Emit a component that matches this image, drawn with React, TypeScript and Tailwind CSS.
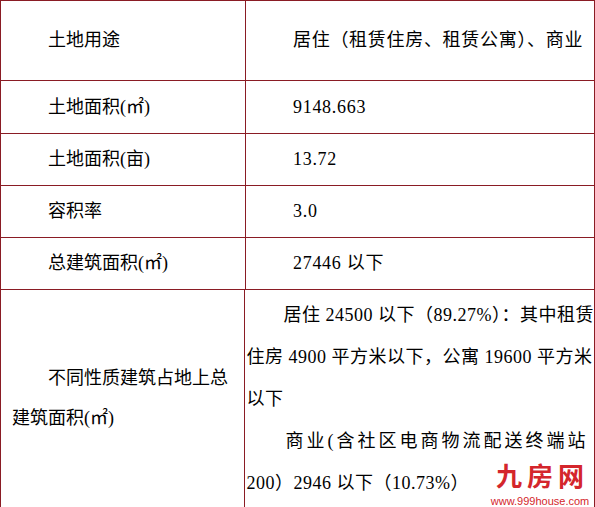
const serif = "font-['Liberation_Serif','Noto_Sans_CJK_SC',serif]";

const rows: { label: string; value: string; h: string }[] = [
  { label: "土地用途", value: "居住（租赁住房、租赁公寓）、商业", h: "h-[80px]" },
  { label: "土地面积(㎡)", value: "9148.663", h: "h-[53px]" },
  { label: "土地面积(亩)", value: "13.72", h: "h-[52px]" },
  { label: "容积率", value: "3.0", h: "h-[52px]" },
  { label: "总建筑面积(㎡)", value: "27446 以下", h: "h-[52px]" },
];

export default function App() {
  return (
    <div className={`relative h-[507px] w-[595px] overflow-hidden bg-white text-[18px] text-black ${serif}`}>
      <div className="w-[595px] border-t border-l border-r border-[#8a1c24]">
        {rows.map((r) => (
          <div key={r.label} className={`flex border-b border-[#8a1c24] ${r.h}`}>
            <div className="flex w-[245px] items-center border-r border-[#8a1c24] pl-[47px]">{r.label}</div>
            <div className="flex flex-1 items-center pl-[47px] tracking-[0.7px] whitespace-nowrap">{r.value}</div>
          </div>
        ))}
        <div className="flex h-[230px]">
          <div className="w-[245px] border-r border-[#8a1c24] pt-[68px] pl-[11px] leading-[40px]">
            <div className="pl-[36px]">不同性质建筑占地上总</div>
            <div>建筑面积(㎡)</div>
          </div>
          <div className="flex-1 pt-[4px] pl-[2px] leading-[42px] tracking-[0.5px] whitespace-nowrap">
            <div className="pl-[37px]">居住 24500 以下（89.27%）：其中租赁</div>
            <div>住房 4900 平方米以下，公寓 19600 平方米</div>
            <div>以下</div>
            <div className="pl-[39px] tracking-[3px]">商业(含社区电商物流配送终端站</div>
            <div>200）2946 以下（10.73%）</div>
          </div>
        </div>
      </div>
      <div className="absolute left-[491px] top-[462px] flex w-[98px] flex-col items-center text-[#d4262c]">
        <div className="pl-[5px] font-['Noto_Sans_CJK_SC',sans-serif] text-[26px] leading-[26px] font-bold tracking-[5px]">九房网</div>
        <div className="mt-[7px] font-['Liberation_Sans',sans-serif] text-[11px] leading-[12px]">www.999house.com</div>
      </div>
    </div>
  );
}
